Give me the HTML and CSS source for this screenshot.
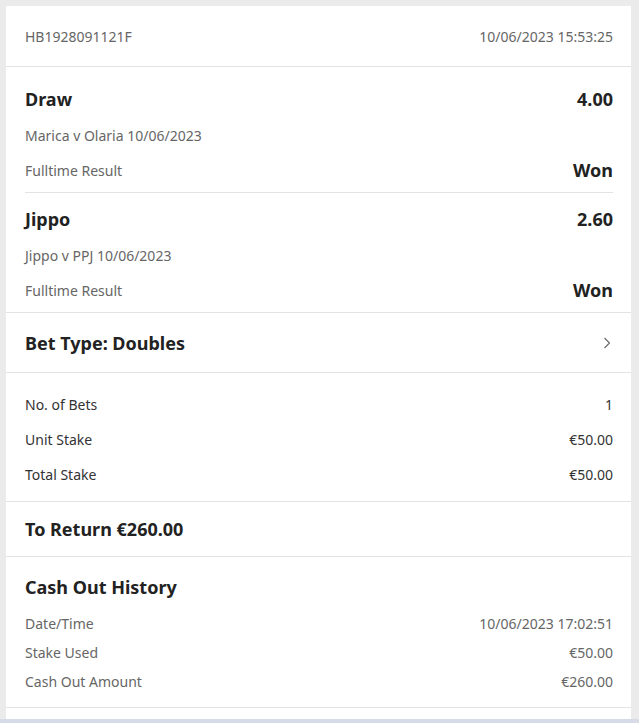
FILE: index.html
```html
<!DOCTYPE html>
<html lang="en">
<head>
    <meta charset="UTF-8">
    <meta name="viewport" content="width=device-width, initial-scale=1.0">
    <title>Bet Details</title>
    <link rel="stylesheet" href="styles.css">
</head>
<body>
    <div class="card">
        <div class="bet-header">
            <span>HB1928091121F</span>
            <span>10/06/2023 15:53:25</span>
        </div>

        <div class="selections">
            <div class="selection">
                <div class="row sel-title">
                    <span>Draw</span>
                    <span>4.00</span>
                </div>
                <div class="sel-event">Marica v Olaria 10/06/2023</div>
                <div class="row sel-market">
                    <span>Fulltime Result</span>
                    <span class="result">Won</span>
                </div>
            </div>
            <div class="selection">
                <div class="row sel-title">
                    <span>Jippo</span>
                    <span>2.60</span>
                </div>
                <div class="sel-event">Jippo v PPJ 10/06/2023</div>
                <div class="row sel-market">
                    <span>Fulltime Result</span>
                    <span class="result">Won</span>
                </div>
            </div>
        </div>

        <div class="row bet-type">
            <span>Bet Type: Doubles</span>
            <svg class="chevron" width="8" height="12" viewBox="0 0 8 12">
                <path d="M1.5 1 L6.5 6 L1.5 11" fill="none" stroke="#666" stroke-width="1.1"/>
            </svg>
        </div>

        <div class="stakes">
            <div class="row stake-row"><span>No. of Bets</span><span>1</span></div>
            <div class="row stake-row"><span>Unit Stake</span><span>€50.00</span></div>
            <div class="row stake-row"><span>Total Stake</span><span>€50.00</span></div>
        </div>

        <div class="to-return">To Return €260.00</div>

        <div class="cashout">
            <div class="cashout-title">Cash Out History</div>
            <div class="row cashout-row"><span>Date/Time</span><span>10/06/2023 17:02:51</span></div>
            <div class="row cashout-row"><span>Stake Used</span><span>€50.00</span></div>
            <div class="row cashout-row"><span>Cash Out Amount</span><span>€260.00</span></div>
        </div>
    </div>
    <div class="footer-strip"></div>
</body>
</html>
```

FILE: styles.css
```css
:root {
    --page-bg: #ebebeb;
    --line: #e3e3e3;
    --text-dark: #222;
    --text-mid: #333;
    --text-grey: #666;
}
body {
    font-family: "Noto Sans", "Open Sans", sans-serif;
    font-size: 14px;
    margin: 0;
    padding: 6px 8px 0 6px;
    background-color: var(--page-bg);
    color: var(--text-mid);
}
.card {
    background: #fff;
    height: 713px;
}
.row {
    display: flex;
    justify-content: space-between;
    align-items: center;
}
.bet-header {
    display: flex;
    justify-content: space-between;
    align-items: center;
    height: 60px;
    padding: 0 18px 0 19px;
    border-bottom: 1px solid var(--line);
    color: var(--text-grey);
}
.selections {
    padding: 6px 18px 0 19px;
    border-bottom: 1px solid var(--line);
}
.selection {
    padding: 12px 0 8px;
    border-bottom: 1px solid var(--line);
}
.selection:last-child {
    border-bottom: none;
}
.sel-title {
    height: 28px;
    font-size: 18px;
    font-weight: bold;
    color: var(--text-dark);
}
.sel-event {
    margin-top: 13px;
    line-height: 20px;
    color: var(--text-grey);
}
.sel-market {
    margin-top: 10px;
    height: 28px;
    color: var(--text-grey);
}
.result {
    font-size: 18px;
    font-weight: bold;
    color: var(--text-dark);
}
.bet-type {
    height: 59px;
    padding: 0 20px 0 19px;
    border-bottom: 1px solid var(--line);
    font-size: 18px;
    font-weight: bold;
    color: var(--text-dark);
}
.stakes {
    padding: 14px 18px 9px 19px;
    border-bottom: 1px solid var(--line);
}
.stake-row {
    height: 35px;
}
.to-return {
    display: flex;
    align-items: center;
    height: 54px;
    padding: 0 19px;
    border-bottom: 1px solid var(--line);
    font-size: 18px;
    font-weight: bold;
    color: var(--text-dark);
}
.cashout {
    padding: 16px 18px 11px 19px;
    border-bottom: 1px solid var(--line);
}
.cashout-title {
    line-height: 28px;
    margin-bottom: 8px;
    font-size: 18px;
    font-weight: bold;
    color: var(--text-dark);
}
.cashout-row {
    height: 29px;
    color: var(--text-grey);
}
.footer-strip {
    height: 4px;
    margin: 0 -8px 0 -6px;
    background: #d6dbe7;
}
```
